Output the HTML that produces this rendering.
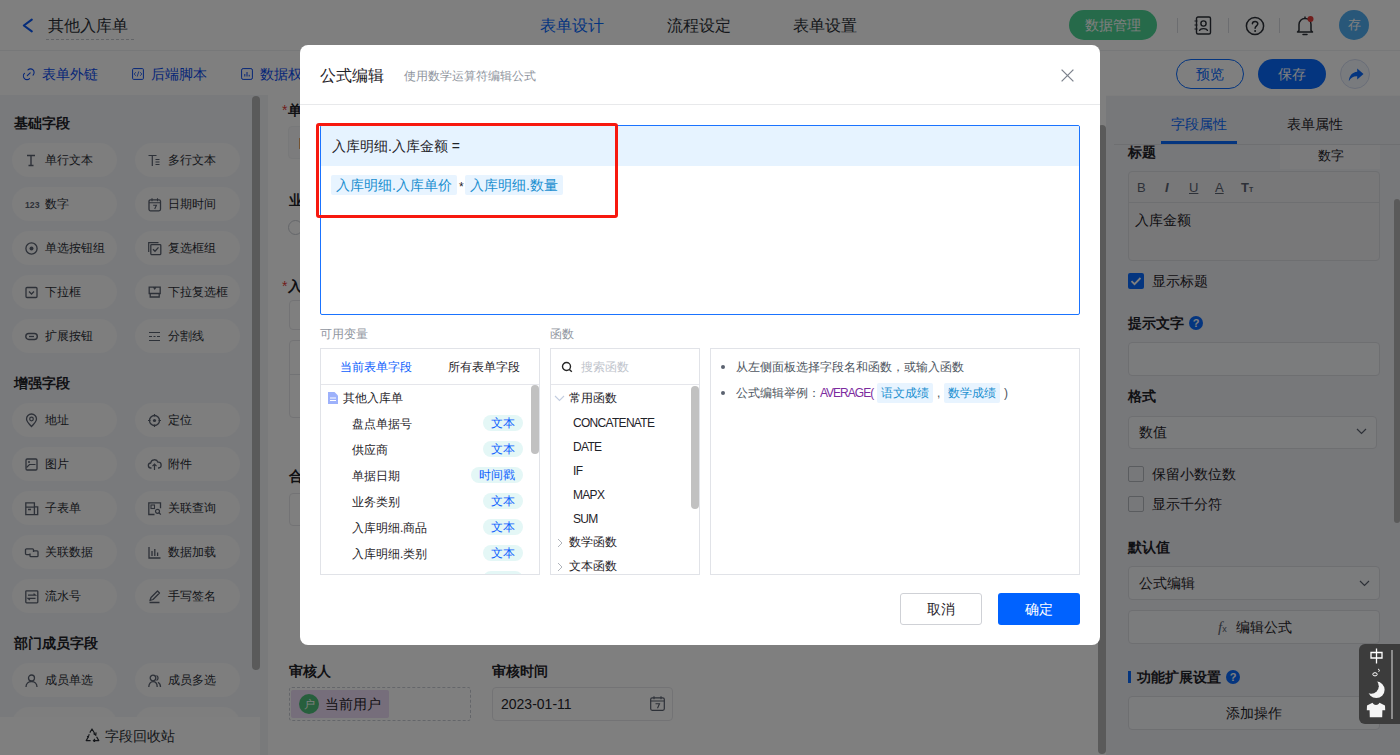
<!DOCTYPE html>
<html><head><meta charset="utf-8">
<style>
*{box-sizing:border-box;margin:0;padding:0}
html,body{width:1400px;height:755px;overflow:hidden;background:#fff;font-family:"Liberation Sans",sans-serif;color:#1f2329}
.a{position:absolute}
#app{position:absolute;left:0;top:0;width:1400px;height:755px;overflow:hidden}
/* header */
#hdr{left:0;top:0;width:1400px;height:51px;background:#fff;border-bottom:1px solid #eff0f2}
#sub{left:0;top:51px;width:1400px;height:44px;background:#fff}
#left{left:0;top:95px;width:260px;height:660px;background:#f3f5f8}
#canvas{left:260px;top:95px;width:846px;height:660px;background:#f3f4f6}
#form{left:268px;top:95px;width:838px;height:660px;background:#fff}
#right{left:1106px;top:95px;width:294px;height:660px;background:#eff0f4}
.t{position:absolute;white-space:nowrap;line-height:1.4}
.blue{color:#0a4bf0}
.btn-green{left:1069px;top:10px;width:88px;height:30px;border-radius:15px;background:#4cd495;color:#fff;font-size:14px;line-height:30px;text-align:center}
.sep{top:18px;width:1px;height:15px;background:#d9dbe0}
.avatar{left:1339px;top:10px;width:30px;height:30px;border-radius:50%;background:#50aef2;color:#fff;font-size:13px;line-height:30px;text-align:center}
.btn-out{left:1176px;top:8px;width:68px;height:30px;border:1px solid #086aff;border-radius:15px;color:#086aff;font-size:14px;line-height:28px;text-align:center}
.btn-save{left:1258px;top:8px;width:68px;height:30px;border-radius:15px;background:#086aff;color:#fff;font-size:14px;line-height:30px;text-align:center}
.share{left:1340px;top:8px;width:30px;height:30px;border-radius:50%;border:1px solid #d3dcf0;background:#f3f6fd}
.sec{position:absolute;left:14px;font-size:14px;font-weight:bold;color:#1f2329;line-height:20px;white-space:nowrap}
.pill{position:absolute;width:105px;height:34px;border-radius:17px;background:#fcfcfd;font-size:12px;color:#2b2f36;line-height:34px;white-space:nowrap}
.pill .ic{position:absolute;left:13px;top:10.5px;overflow:visible}
.pill span{position:absolute;left:33px;top:0}
.recycle{position:absolute;left:0;top:622px;width:260px;height:38px;background:#fff;font-size:14px;color:#2b2f36;line-height:20px}
.lbl{position:absolute;font-size:14px;font-weight:bold;color:#1f2329;line-height:20px;white-space:nowrap}
.lbl i{font-style:normal;color:#e23c39;font-weight:normal;margin-right:1px}
.inp{position:absolute;border:1px solid #e6e7ea;border-radius:4px;background:#fff}
.tb{font-size:13px;line-height:16px;color:#5b6270}
.qm{position:absolute;width:14px;height:14px;border-radius:50%;background:#086aff;color:#fff;font-size:11px;font-weight:bold;line-height:14px;text-align:center}
.cb{position:absolute;width:16px;height:16px;border:1px solid #b4b8bf;border-radius:2px;background:transparent}
.box{position:absolute;border:1px solid #e1e3e8;background:#fff}
.vtag{position:absolute;height:16px;border-radius:8px;background:#e4f7f6;color:#0f62fe;font-size:12px;line-height:16px;text-align:center}
.ftag{position:absolute;height:20px;padding:0 5px;border-radius:2px;background:#e8f4ff;color:#1a8fd0;font-size:14px;line-height:20px;white-space:nowrap}
.etag{position:absolute;height:20px;border-radius:2px;background:#e8f4ff;color:#1a8fd0;font-size:12px;line-height:20px;text-align:center}
.mask{position:absolute;left:0;top:0;width:1400px;height:755px;background:rgba(0,0,0,.5)}
.modal{position:absolute;left:300px;top:45px;width:800px;height:600px;background:#fff;border-radius:8px}
</style></head><body>
<div id="app">
  <div id="hdr" class="a">
    <svg class="a" style="left:22px;top:17px" width="12" height="17" viewBox="0 0 12 17"><path d="M9.8 2.6 L1.8 8.5 L9.8 14.4" fill="none" stroke="#0a58f5" stroke-width="2.1" stroke-linecap="round" stroke-linejoin="round"/></svg>
    <div class="t" style="left:48px;top:15px;font-size:16px;color:#2b2f36">其他入库单</div>
    <div class="a" style="left:46px;top:39px;width:88px;border-top:1px dashed #c5c8ce"></div>
    <div class="t" style="left:540px;top:15px;font-size:16px;color:#086aff">表单设计</div>
    <div class="t" style="left:667px;top:15px;font-size:16px;color:#2b2f36">流程设定</div>
    <div class="t" style="left:793px;top:15px;font-size:16px;color:#2b2f36">表单设置</div>
    <div class="a btn-green">数据管理</div>
    <div class="a sep" style="left:1177px"></div>
    <div class="a sep" style="left:1228px"></div>
    <div class="a sep" style="left:1279px"></div>
    <svg class="a" style="left:1193px;top:16px" width="20" height="19" viewBox="0 0 20 19"><rect x="3.5" y="1" width="14" height="17" rx="1.5" fill="none" stroke="#2b2f36" stroke-width="1.4"/><circle cx="10.5" cy="7.5" r="2.6" fill="none" stroke="#2b2f36" stroke-width="1.4"/><path d="M6.5 15 C6.8 11.8 14.2 11.8 14.5 15" fill="none" stroke="#2b2f36" stroke-width="1.4"/><path d="M1.5 5h3M1.5 9h3M1.5 13h3" stroke="#2b2f36" stroke-width="1.2"/></svg>
    <svg class="a" style="left:1245px;top:16px" width="20" height="20" viewBox="0 0 20 20"><circle cx="10" cy="10" r="8.6" fill="none" stroke="#2b2f36" stroke-width="1.5"/><path d="M7.4 7.8 C7.4 4.6 12.8 4.6 12.8 7.8 C12.8 9.8 10.1 10 10.1 12.3" fill="none" stroke="#2b2f36" stroke-width="1.5" stroke-linecap="round"/><circle cx="10.1" cy="14.9" r="1" fill="#2b2f36"/></svg>
    <svg class="a" style="left:1296px;top:15px" width="18" height="21" viewBox="0 0 18 21"><path d="M3 15.5 V9.5 C3 6 5.6 3.6 9 3.6 C12.4 3.6 15 6 15 9.5 V15.5 L16.5 17 H1.5 Z" fill="none" stroke="#2b2f36" stroke-width="1.5" stroke-linejoin="round"/><path d="M7 19.5 H11" stroke="#2b2f36" stroke-width="1.5" stroke-linecap="round"/><path d="M9 1.5 V3.5" stroke="#2b2f36" stroke-width="1.4"/><circle cx="14.5" cy="4" r="3" fill="#e23c39"/></svg>
    <div class="a avatar">存</div>
  </div>
  <div id="sub" class="a">
    <svg class="a" style="left:22px;top:16px" width="14" height="14" viewBox="0 0 14 14"><path d="M5.95 2.95A3.6 3.6 0 0 1 11.05 8.05M7.55 11.55A3.6 3.6 0 0 1 2.45 6.45M5.3 8.7L8.2 5.8" fill="none" stroke="#0a4bf0" stroke-width="1.1" stroke-linecap="round"/></svg>
    <div class="t blue" style="left:42px;top:14px;font-size:14px">表单外链</div>
    <svg class="a" style="left:132px;top:17px" width="12" height="12" viewBox="0 0 12 12"><rect x="0.6" y="0.6" width="10.8" height="10.8" rx="1" fill="none" stroke="#0a4bf0" stroke-width="1"/><path d="M3.8 4.2 L2.2 6 L3.8 7.8 M8.2 4.2 L9.8 6 L8.2 7.8 M6.8 3.4 L5.2 8.6" fill="none" stroke="#0a4bf0" stroke-width="0.8"/></svg>
    <div class="t blue" style="left:151px;top:14px;font-size:14px">后端脚本</div>
    <svg class="a" style="left:241px;top:17px" width="12" height="12" viewBox="0 0 12 12"><rect x="0.6" y="0.6" width="10.8" height="10.8" rx="1.5" fill="none" stroke="#0a4bf0" stroke-width="1"/><path d="M3.8 8.5V6M6 8.5V4M8.2 8.5V6.8" stroke="#0a4bf0" stroke-width="1"/></svg>
    <div class="t blue" style="left:260px;top:14px;font-size:14px">数据权限</div>
    <div class="a btn-out">预览</div>
    <div class="a btn-save">保存</div>
    <div class="a share"><svg width="16" height="14" viewBox="0 0 16 14" style="position:absolute;left:7px;top:8px"><path d="M9.2 0.5 L15.5 6 L9.2 11.5 V8.3 C5.5 8.1 2.8 9.6 0.8 13.2 C1.2 7.6 4.3 4.2 9.2 3.7 Z" fill="#086aff"/></svg></div>
  </div>
  <div id="left" class="a">
<div class="sec" style="top:18px">基础字段</div>
<div class="pill" style="left:12px;top:48px"><svg class="ic" width="13" height="13" viewBox="0 0 13 13"><path d="M2 1.5h8M6 1.5v10M3.5 11.5h5" stroke="#5b6270" stroke-width="1.4" fill="none"/></svg><span>单行文本</span></div>
<div class="pill" style="left:135px;top:48px"><svg class="ic" width="13" height="13" viewBox="0 0 13 13"><path d="M0.5 1.5h8M4.3 1.5v10.5M7.5 5.5h4M7.5 8h4M7.5 10.5h4" stroke="#5b6270" stroke-width="1.2" fill="none"/></svg><span>多行文本</span></div>
<div class="pill" style="left:12px;top:92px"><svg class="ic" width="13" height="13" viewBox="0 0 13 13"><text x="0" y="10" font-size="9.5" font-weight="bold" fill="#5b6270" font-family="Liberation Sans" textLength="14.5" lengthAdjust="spacingAndGlyphs">123</text></svg><span>数字</span></div>
<div class="pill" style="left:135px;top:92px"><svg class="ic" width="13" height="13" viewBox="0 0 13 13"><rect x="1" y="1.8" width="11.5" height="11" rx="1.5" stroke="#5b6270" stroke-width="1.3" fill="none"/><path d="M1 4.8h11.5M4 0.2v3M9.5 0.2v3M5.2 7.3h3.2l-1.7 3.6" stroke="#5b6270" stroke-width="1.1" fill="none"/></svg><span>日期时间</span></div>
<div class="pill" style="left:12px;top:136px"><svg class="ic" width="13" height="13" viewBox="0 0 13 13"><circle cx="6.5" cy="6.5" r="5.6" stroke="#5b6270" stroke-width="1.3" fill="none"/><circle cx="6.5" cy="6.5" r="2" fill="#5b6270"/></svg><span>单选按钮组</span></div>
<div class="pill" style="left:135px;top:136px"><svg class="ic" width="13" height="13" viewBox="0 0 13 13"><path d="M0.7 10V0.7H10.5" stroke="#5b6270" stroke-width="1.2" fill="none"/><rect x="2.8" y="2.6" width="10" height="10" rx="0.8" stroke="#5b6270" stroke-width="1.3" fill="none"/><path d="M5 7.2l2 2 3.5-3.8" stroke="#5b6270" stroke-width="1.3" fill="none"/></svg><span>复选框组</span></div>
<div class="pill" style="left:12px;top:180px"><svg class="ic" width="13" height="13" viewBox="0 0 13 13"><rect x="1" y="1.5" width="11" height="10" rx="1" stroke="#5b6270" stroke-width="1.3" fill="none"/><path d="M4 5.5l2.5 2.5 2.5-2.5" stroke="#5b6270" stroke-width="1.3" fill="none"/></svg><span>下拉框</span></div>
<div class="pill" style="left:135px;top:180px"><svg class="ic" width="13" height="13" viewBox="0 0 13 13"><path d="M1.2 1.2H12.2V7.5H1.2Z" stroke="#5b6270" stroke-width="1.3" fill="none"/><path d="M5.5 1.2L6.7 3 7.9 1.2" stroke="#5b6270" stroke-width="1.2" fill="#5b6270"/><path d="M2.2 7.5V11H11.2V7.5" stroke="#5b6270" stroke-width="1.3" fill="none"/></svg><span>下拉复选框</span></div>
<div class="pill" style="left:12px;top:224px"><svg class="ic" width="13" height="13" viewBox="0 0 13 13"><rect x="0.8" y="3.5" width="11.5" height="6" rx="3" stroke="#5b6270" stroke-width="1.4" fill="none"/><path d="M4 6.5h5" stroke="#5b6270" stroke-width="1.3"/></svg><span>扩展按钮</span></div>
<div class="pill" style="left:135px;top:224px"><svg class="ic" width="13" height="13" viewBox="0 0 13 13"><path d="M1 2.5h11M1 6.5h3M5.5 6.5h2M9 6.5h3M1 10.5h11" stroke="#5b6270" stroke-width="1.2" fill="none"/></svg><span>分割线</span></div>

<div class="sec" style="top:278px">增强字段</div>
<div class="pill" style="left:12px;top:308px"><svg class="ic" width="13" height="13" viewBox="0 0 13 13"><path d="M6.5 12.5C3 9 1.5 6.8 1.5 5a5 5 0 0 1 10 0c0 1.8-1.5 4-5 7.5z" stroke="#5b6270" stroke-width="1.3" fill="none"/><circle cx="6.5" cy="5" r="1.8" stroke="#5b6270" stroke-width="1.2" fill="none"/></svg><span>地址</span></div>
<div class="pill" style="left:135px;top:308px"><svg class="ic" width="13" height="13" viewBox="0 0 13 13"><circle cx="6.5" cy="6.5" r="5" stroke="#5b6270" stroke-width="1.3" fill="none"/><circle cx="6.5" cy="6.5" r="1.6" fill="#5b6270"/><path d="M6.5 0v2.5M6.5 10.5V13M0 6.5h2.5M10.5 6.5H13" stroke="#5b6270" stroke-width="1.2"/></svg><span>定位</span></div>
<div class="pill" style="left:12px;top:352px"><svg class="ic" width="13" height="13" viewBox="0 0 13 13"><rect x="1" y="1" width="11" height="11" rx="1.2" stroke="#5b6270" stroke-width="1.3" fill="none"/><path d="M1.5 9.5l3-3 6 0" stroke="#5b6270" stroke-width="1.2" fill="none"/><circle cx="4" cy="4" r="1" fill="#5b6270"/></svg><span>图片</span></div>
<div class="pill" style="left:135px;top:352px"><svg class="ic" width="13" height="13" viewBox="0 0 13 13"><path d="M3.5 10H3a2.5 2.5 0 0 1-.3-5A3.8 3.8 0 0 1 10 4.2 2.9 2.9 0 0 1 10.5 10H10" stroke="#5b6270" stroke-width="1.3" fill="none"/><path d="M6.5 12V6.5M4.5 8.2l2-2 2 2" stroke="#5b6270" stroke-width="1.2" fill="none"/></svg><span>附件</span></div>
<div class="pill" style="left:12px;top:396px"><svg class="ic" width="13" height="13" viewBox="0 0 13 13"><path d="M0.8 0.8h8.6v11.8H0.8zM0.8 5.2h8.6M3 7.5h3M9.4 4.8h3.3v7.8H9.4" stroke="#5b6270" stroke-width="1.3" fill="none"/></svg><span>子表单</span></div>
<div class="pill" style="left:135px;top:396px"><svg class="ic" width="13" height="13" viewBox="0 0 13 13"><path d="M6.5 12.5H0.8V0.8h11.7v5.5" stroke="#5b6270" stroke-width="1.3" fill="none"/><rect x="3" y="3" width="3.5" height="3.5" stroke="#5b6270" stroke-width="1.1" fill="none"/><circle cx="9.5" cy="9.3" r="2" stroke="#5b6270" stroke-width="1.2" fill="none"/><path d="M11 10.8l1.8 1.8" stroke="#5b6270" stroke-width="1.3"/></svg><span>关联查询</span></div>
<div class="pill" style="left:12px;top:440px"><svg class="ic" width="13" height="13" viewBox="0 0 13 13"><path d="M5 8.6H1.5a1 1 0 0 1-1-1V3.8a1 1 0 0 1 1-1h6a1 1 0 0 1 1 1V6" stroke="#5b6270" stroke-width="1.3" fill="none"/><path d="M8.5 4.8H12a1 1 0 0 1 1 1v3.9a1 1 0 0 1-1 1H6a1 1 0 0 1-1-1V7.4" stroke="#5b6270" stroke-width="1.3" fill="none"/></svg><span>关联数据</span></div>
<div class="pill" style="left:135px;top:440px"><svg class="ic" width="13" height="13" viewBox="0 0 13 13"><path d="M1 1v11h11.5M4 10V5M6.8 10V3M9.6 10V6.5" stroke="#5b6270" stroke-width="1.3" fill="none"/></svg><span>数据加载</span></div>
<div class="pill" style="left:12px;top:484px"><svg class="ic" width="13" height="13" viewBox="0 0 13 13"><rect x="0.8" y="0.8" width="12" height="12" rx="0.8" stroke="#5b6270" stroke-width="1.3" fill="none"/><path d="M3 5.2h7.5L8.6 3.6M10.5 8.4H3l1.9 1.6" stroke="#5b6270" stroke-width="1.2" fill="none"/></svg><span>流水号</span></div>
<div class="pill" style="left:135px;top:484px"><svg class="ic" width="13" height="13" viewBox="0 0 13 13"><path d="M2 10.5l1-3L9.5 1 11.5 3 5 9.5zM1.5 12.5h10" stroke="#5b6270" stroke-width="1.3" fill="none" stroke-linejoin="round"/></svg><span>手写签名</span></div>

<div class="sec" style="top:538px">部门成员字段</div>
<div class="pill" style="left:12px;top:568px"><svg class="ic" width="13" height="13" viewBox="0 0 13 13"><circle cx="6.5" cy="4" r="3" stroke="#5b6270" stroke-width="1.3" fill="none"/><path d="M1 13c0-3.5 2.5-5.5 5.5-5.5s5.5 2 5.5 5.5" stroke="#5b6270" stroke-width="1.3" fill="none"/></svg><span>成员单选</span></div>
<div class="pill" style="left:135px;top:568px"><svg class="ic" width="13" height="13" viewBox="0 0 13 13"><circle cx="5" cy="4" r="2.8" stroke="#5b6270" stroke-width="1.3" fill="none"/><path d="M0.8 13c0-3.3 1.8-5.3 4.2-5.3s4.2 2 4.2 5.3M8.5 1.5a2.8 2.8 0 0 1 0 5M10 8.2c1.5.8 2.5 2.5 2.5 4.8" stroke="#5b6270" stroke-width="1.3" fill="none"/></svg><span>成员多选</span></div>
<div class="pill" style="left:12px;top:612px"><svg class="ic" width="13" height="13" viewBox="0 0 13 13"><circle cx="6.5" cy="4" r="3" stroke="#5b6270" stroke-width="1.3" fill="none"/><path d="M1 13c0-3.5 2.5-5.5 5.5-5.5s5.5 2 5.5 5.5" stroke="#5b6270" stroke-width="1.3" fill="none"/></svg><span>部门单选</span></div>
<div class="pill" style="left:135px;top:612px"><svg class="ic" width="13" height="13" viewBox="0 0 13 13"><circle cx="5" cy="4" r="2.8" stroke="#5b6270" stroke-width="1.3" fill="none"/><path d="M0.8 13c0-3.3 1.8-5.3 4.2-5.3s4.2 2 4.2 5.3M8.5 1.5a2.8 2.8 0 0 1 0 5M10 8.2c1.5.8 2.5 2.5 2.5 4.8" stroke="#5b6270" stroke-width="1.3" fill="none"/></svg><span>部门多选</span></div>

<div class="a" style="left:252px;top:1px;width:8px;height:574px;border-radius:4px;background:#b5b5b5"></div>
<div class="recycle"><svg width="15" height="14" viewBox="0 0 15 14" style="position:absolute;left:85px;top:11px"><path d="M4.8 4.6L7 1l3.6 6M11.6 8.8L13.8 12.6H8.6M5.6 12.6H1.2L3.4 8.8" fill="none" stroke="#2b2f36" stroke-width="1.2" stroke-linejoin="round"/><path d="M8.4 5.6l2.4 1.6.3-2.8M10 11l-1.6 1.6 1.6 1.4M2 8.4l1.4.4.8-2.6" fill="none" stroke="#2b2f36" stroke-width="1.1"/></svg><span style="position:absolute;left:105px;top:9px">字段回收站</span></div>
</div>
  <div id="canvas" class="a"></div>
  <div id="form" class="a">
    <div class="lbl" style="left:14px;top:5px"><i>*</i>单据编号</div>
    <div class="inp" style="left:20px;top:31px;width:370px;height:33px;background:#f9f9fa;border-color:#f1f2f4"></div>
    <div class="a" style="left:31px;top:43px;width:1px;height:11px;background:#e8a868"></div>
    <div class="lbl" style="left:21px;top:95px">业务类别</div>
    <div class="a" style="left:20px;top:125px;width:15px;height:15px;border:1px solid #c9cdd4;border-radius:50%;background:#fff"></div>
    <div class="lbl" style="left:14px;top:181px"><i>*</i>入库明细</div>
    <div class="inp" style="left:21px;top:205px;width:370px;height:30px"></div>
    <div class="inp" style="left:21px;top:245px;width:790px;height:78px"></div>
    <div class="a" style="left:21px;top:279px;width:790px;height:1px;background:#e5e6eb"></div>
    <div class="lbl" style="left:21px;top:371px">合计金额</div>
    <div class="inp" style="left:21px;top:398px;width:370px;height:33px"></div>
    <div class="lbl" style="left:21px;top:566px">审核人</div>
    <div class="a" style="left:21px;top:592px;width:182px;height:34px;border:1px dashed #c9cdd4;border-radius:3px"></div>
    <div class="a" style="left:23px;top:595px;width:98px;height:28px;border-radius:2px;background:#eddcf6"></div>
    <div class="a" style="left:31px;top:599px;width:20px;height:20px;border-radius:50%;background:#4fbf7a;color:#fff;font-size:11px;line-height:20px;text-align:center">户</div>
    <div class="t" style="left:57px;top:599px;font-size:14px;line-height:20px;color:#1f2329">当前用户</div>
    <div class="lbl" style="left:224px;top:566px">审核时间</div>
    <div class="inp" style="left:224px;top:592px;width:181px;height:34px"></div>
    <div class="t" style="left:233px;top:599px;font-size:14px;line-height:20px;color:#1f2329">2023-01-11</div>
    <svg class="a" style="left:382px;top:601px" width="15" height="15" viewBox="0 0 15 15"><rect x="0.7" y="1.8" width="13.6" height="12.5" rx="1.5" fill="none" stroke="#5b6270" stroke-width="1.2"/><path d="M0.7 5h13.6M4 0.3v3M11 0.3v3M5.5 7.8h4l-2 4.5" fill="none" stroke="#5b6270" stroke-width="1.1"/></svg>
  </div>
  <div class="a" style="left:1098px;top:125px;width:8px;height:629px;border-radius:4px;background:#b5b5b5"></div>
  <div id="right" class="a">
    <div class="a" style="left:0;top:0;width:294px;height:1px;background:#fafafb"></div>
    
    <div class="t" style="left:65px;top:19px;font-size:14px;line-height:20px;color:#086aff">字段属性</div>
    <div class="t" style="left:181px;top:19px;font-size:14px;line-height:20px;color:#1f2329">表单属性</div>
    <div class="a" style="left:8px;top:49px;width:286px;height:1px;background:#dcdee3"></div>
    <div class="a" style="left:55px;top:46px;width:76px;height:3px;background:#086aff"></div>
    <div class="lbl" style="left:22px;top:47px">标题</div>
    <div class="a" style="left:174px;top:50px;width:100px;height:24px;background:#f6f7f9"></div>
    <div class="t" style="left:212px;top:51px;font-size:13px;line-height:20px;color:#1f2329">数字</div>
    <div class="inp" style="left:22px;top:76px;width:252px;height:90px;background:#f0f1f3;border-color:#dcdee3"></div>
    <div class="a" style="left:23px;top:107px;width:250px;height:1px;background:#dcdee3"></div>
    <div class="t tb" style="left:31px;top:85px">B</div>
    <div class="t tb" style="left:59px;top:85px;font-style:italic;font-weight:bold;font-size:13px">I</div>
    <div class="t tb" style="left:83px;top:85px;text-decoration:underline">U</div>
    <div class="t tb" style="left:109px;top:85px;text-decoration:underline">A</div>
    <div class="t tb" style="left:135px;top:85px;font-weight:bold">T<span style="font-size:7px">T</span></div>
    <div class="t" style="left:29px;top:115px;font-size:14px;line-height:20px;color:#1f2329">入库金额</div>
    <div class="a" style="left:22px;top:178px;width:16px;height:16px;border-radius:2px;background:#086aff"><svg width="16" height="16" viewBox="0 0 16 16" style="position:absolute;left:0;top:0"><path d="M3.5 8.2l3 3 6-6.2" fill="none" stroke="#fff" stroke-width="1.8"/></svg></div>
    <div class="t" style="left:46px;top:176px;font-size:14px;line-height:20px;color:#1f2329">显示标题</div>
    <div class="lbl" style="left:22px;top:218px">提示文字</div>
    <div class="qm" style="left:83px;top:221px">?</div>
    <div class="inp" style="left:22px;top:247px;width:252px;height:34px;background:#f7f8fa;border-color:#dcdee3"></div>
    <div class="lbl" style="left:22px;top:291px">格式</div>
    <div class="inp" style="left:22px;top:321px;width:249px;height:33px;background:#f7f8fa;border-color:#dcdee3"></div>
    <div class="t" style="left:33px;top:327px;font-size:14px;line-height:20px;color:#1f2329">数值</div>
    <svg class="a" style="left:250px;top:333px" width="11" height="7" viewBox="0 0 11 7"><path d="M1 1l4.5 4.5L10 1" fill="none" stroke="#5b6270" stroke-width="1.2"/></svg>
    <div class="cb" style="left:22px;top:371px"></div>
    <div class="t" style="left:46px;top:369px;font-size:14px;line-height:20px;color:#1f2329">保留小数位数</div>
    <div class="cb" style="left:22px;top:401px"></div>
    <div class="t" style="left:46px;top:399px;font-size:14px;line-height:20px;color:#1f2329">显示千分符</div>
    <div class="lbl" style="left:22px;top:442px">默认值</div>
    <div class="inp" style="left:22px;top:471px;width:252px;height:34px;background:#f7f8fa;border-color:#dcdee3"></div>
    <div class="t" style="left:33px;top:478px;font-size:14px;line-height:20px;color:#1f2329">公式编辑</div>
    <svg class="a" style="left:253px;top:485px" width="11" height="7" viewBox="0 0 11 7"><path d="M1 1l4.5 4.5L10 1" fill="none" stroke="#5b6270" stroke-width="1.2"/></svg>
    <div class="inp" style="left:22px;top:515px;width:252px;height:34px;background:#f7f8fa;border-color:#dcdee3"></div>
    <div class="t" style="left:112px;top:522px;font-size:15px;line-height:20px;color:#5b6270;font-family:'Liberation Serif',serif;font-style:italic">f<span style="font-size:9px;font-style:normal;font-family:'Liberation Sans',sans-serif">x</span></div>
    <div class="t" style="left:130px;top:522px;font-size:14px;line-height:20px;color:#1f2329">编辑公式</div>
    <div class="a" style="left:22px;top:576px;width:3px;height:12px;background:#086aff"></div>
    <div class="lbl" style="left:31px;top:572px">功能扩展设置</div>
    <div class="qm" style="left:120px;top:575px">?</div>
    <div class="inp" style="left:22px;top:601px;width:252px;height:34px;background:#f7f8fa;border-color:#dcdee3"></div>
    <div class="t" style="left:120px;top:608px;font-size:14px;line-height:20px;color:#1f2329">添加操作</div>
    <div class="a" style="left:288px;top:104px;width:6px;height:324px;border-radius:3px;background:#b5b5b5"></div>
  </div>
</div>
<div class="mask"></div>
<div class="modal">
  <div class="t" style="left:20px;top:20px;font-size:16px;line-height:22px;color:#1f2329">公式编辑</div>
  <div class="t" style="left:104px;top:22px;font-size:12px;line-height:18px;color:#8f959e">使用数学运算符编辑公式</div>
  <svg class="a" style="left:761px;top:24px" width="13" height="13" viewBox="0 0 13 13"><path d="M0.6 0.6L12.4 12.4M12.4 0.6L0.6 12.4" stroke="#7d838d" stroke-width="1.3"/></svg>
  <div class="a" style="left:0;top:59px;width:800px;height:1px;background:#e8e9eb"></div>
  <div class="a" style="left:20px;top:80px;width:760px;height:190px;border:1px solid #1a73ff;border-radius:2px;overflow:hidden">
    <div class="a" style="left:0;top:0;width:758px;height:40px;background:#e6f3ff"></div>
    <div class="t" style="left:11px;top:10px;font-size:14px;line-height:20px;color:#1f2329">入库明细.入库金额 =</div>
    <div class="ftag" style="left:10px;top:49px">入库明细.入库单价</div>
    <div class="t" style="left:138px;top:51px;font-size:12px;line-height:20px;color:#1f2329">*</div>
    <div class="ftag" style="left:144px;top:49px">入库明细.数量</div>
  </div>
  <div class="a" style="left:16px;top:78px;width:302px;height:95px;border:3px solid #f7180f;border-radius:3px"></div>
  <div class="t" style="left:20px;top:280px;font-size:12px;line-height:18px;color:#8f959e">可用变量</div>
  <div class="t" style="left:250px;top:280px;font-size:12px;line-height:18px;color:#8f959e">函数</div>
  <div class="box" style="left:20px;top:303px;width:220px;height:227px">
    <div class="a" style="left:0;top:35px;width:218px;height:1px;background:#e5e6eb"></div>
  </div>
  <div class="t" style="left:40px;top:312px;font-size:12px;line-height:20px;color:#0d5efc">当前表单字段</div>
  <div class="t" style="left:148px;top:312px;font-size:12px;line-height:20px;color:#1f2329">所有表单字段</div>
  <svg class="a" style="left:28px;top:347px" width="10" height="12" viewBox="0 0 10 12"><path d="M0 0h6.5L10 3.5V12H0z" fill="#9db1fb"/><path d="M2 6h6M2 8.5h6" stroke="#fff" stroke-width="1"/></svg>
  <div class="t" style="left:43px;top:343px;font-size:12px;line-height:20px;color:#1f2329">其他入库单</div>
  <div class="t" style="left:52px;top:369px;font-size:12px;line-height:20px;color:#1f2329">盘点单据号</div><div class="vtag" style="left:183px;top:370px;width:40px">文本</div>
<div class="t" style="left:52px;top:395px;font-size:12px;line-height:20px;color:#1f2329">供应商</div><div class="vtag" style="left:183px;top:396px;width:40px">文本</div>
<div class="t" style="left:52px;top:421px;font-size:12px;line-height:20px;color:#1f2329">单据日期</div><div class="vtag" style="left:171px;top:422px;width:52px">时间戳</div>
<div class="t" style="left:52px;top:447px;font-size:12px;line-height:20px;color:#1f2329">业务类别</div><div class="vtag" style="left:183px;top:448px;width:40px">文本</div>
<div class="t" style="left:52px;top:473px;font-size:12px;line-height:20px;color:#1f2329">入库明细.商品</div><div class="vtag" style="left:183px;top:474px;width:40px">文本</div>
<div class="t" style="left:52px;top:499px;font-size:12px;line-height:20px;color:#1f2329">入库明细.类别</div><div class="vtag" style="left:183px;top:500px;width:40px">文本</div>
<div class="a" style="left:183px;top:526px;width:40px;height:3px;overflow:hidden"><div class="vtag" style="left:0;top:0;width:40px"></div></div>

  <div class="a" style="left:231px;top:340px;width:8px;height:69px;border-radius:4px;background:#c1c1c1"></div>
  <div class="box" style="left:250px;top:303px;width:150px;height:227px;overflow:hidden">
    <div class="a" style="left:0;top:35px;width:148px;height:1px;background:#e5e6eb"></div>
  </div>
  <svg class="a" style="left:261px;top:316px" width="12" height="12" viewBox="0 0 12 12"><circle cx="5.5" cy="5.5" r="4" fill="none" stroke="#262626" stroke-width="1.4"/><path d="M8.4 8.4L10.8 10.8" stroke="#262626" stroke-width="1.4"/></svg>
  <div class="t" style="left:281px;top:312px;font-size:12px;line-height:20px;color:#c0c4cc">搜索函数</div>
  <svg class="a" style="left:254px;top:350px" width="11" height="7" viewBox="0 0 11 7"><path d="M1 1l4.5 4.5L10 1" fill="none" stroke="#c3cde0" stroke-width="1.1"/></svg>
  <div class="t" style="left:269px;top:343px;font-size:12px;line-height:20px;color:#1f2329">常用函数</div>
  <div class="t" style="left:273px;top:367.5px;font-size:12px;line-height:20px;color:#1f2329;letter-spacing:-0.7px">CONCATENATE</div>
<div class="t" style="left:273px;top:391.5px;font-size:12px;line-height:20px;color:#1f2329;letter-spacing:-0.7px">DATE</div>
<div class="t" style="left:273px;top:415.5px;font-size:12px;line-height:20px;color:#1f2329;letter-spacing:-0.7px">IF</div>
<div class="t" style="left:273px;top:439.5px;font-size:12px;line-height:20px;color:#1f2329;letter-spacing:-0.7px">MAPX</div>
<div class="t" style="left:273px;top:463.5px;font-size:12px;line-height:20px;color:#1f2329;letter-spacing:-0.7px">SUM</div>

  <svg class="a" style="left:257px;top:493px" width="6" height="10" viewBox="0 0 6 10"><path d="M1 1l4 4-4 4" fill="none" stroke="#b0b4bb" stroke-width="1"/></svg>
  <div class="t" style="left:269px;top:487px;font-size:12px;line-height:20px;color:#1f2329">数学函数</div>
  <svg class="a" style="left:257px;top:517px" width="6" height="10" viewBox="0 0 6 10"><path d="M1 1l4 4-4 4" fill="none" stroke="#b0b4bb" stroke-width="1"/></svg>
  <div class="t" style="left:269px;top:511px;font-size:12px;line-height:20px;color:#1f2329">文本函数</div>
  <div class="a" style="left:391px;top:341px;width:8px;height:123px;border-radius:4px;background:#c1c1c1"></div>
  <div class="box" style="left:410px;top:303px;width:370px;height:227px"></div>
  <div class="a" style="left:421px;top:320px;width:4px;height:4px;border-radius:50%;background:#5b6270"></div>
  <div class="t" style="left:436px;top:312px;font-size:12px;line-height:20px;color:#4e5661">从左侧面板选择字段名和函数，或输入函数</div>
  <div class="a" style="left:421px;top:346px;width:4px;height:4px;border-radius:50%;background:#5b6270"></div>
  <div class="t" style="left:436px;top:338px;font-size:12px;line-height:20px;color:#4e5661">公式编辑举例：<span style="color:#7c2b9e;letter-spacing:-1px">AVERAGE(</span></div>
  <div class="etag" style="left:577px;top:338px;width:56px">语文成绩</div>
  <div class="t" style="left:637px;top:338px;font-size:12px;line-height:20px;color:#4e5661">,</div>
  <div class="etag" style="left:644px;top:338px;width:56px">数学成绩</div>
  <div class="t" style="left:704px;top:338px;font-size:12px;line-height:20px;color:#4e5661">)</div>
  <div class="a" style="left:600px;top:548px;width:82px;height:32px;border:1px solid #cfd1d6;border-radius:3px;background:#fff;font-size:14px;line-height:30px;text-align:center;color:#1f2329">取消</div>
  <div class="a" style="left:698px;top:548px;width:82px;height:32px;border-radius:3px;background:#0062ff;font-size:14px;line-height:32px;text-align:center;color:#fff">确定</div>
</div>
<div class="a" style="left:1359px;top:644px;width:48px;height:80px;border-radius:6px;background:#3c3c3c">
  <svg class="a" style="left:11px;top:4px" width="13" height="16" viewBox="0 0 13 16"><path d="M1 4.5h11v5.5H1zM6.5 0.5V15.5" fill="none" stroke="#fff" stroke-width="1.3"/></svg>
  <svg class="a" style="left:13px;top:24px" width="9" height="9" viewBox="0 0 9 9"><ellipse cx="3" cy="6.3" rx="2.2" ry="1.6" fill="none" stroke="#fff" stroke-width="1"/><path d="M6 1.2c1.5 0 1.8 1.5.6 2.6" fill="none" stroke="#fff" stroke-width="1"/></svg>
  <svg class="a" style="left:9px;top:36px" width="17" height="19" viewBox="0 0 17 19"><defs><mask id="mm"><rect width="17" height="19" fill="#fff"/><circle cx="3.2" cy="6.2" r="7.6" fill="#000"/></mask></defs><circle cx="8.3" cy="9.8" r="8.3" fill="#f4f4f4" mask="url(#mm)"/></svg>
  <svg class="a" style="left:7px;top:58px" width="20" height="16" viewBox="0 0 20 16"><path d="M6.5 0.8L1 3.5 0.8 8.2 3.6 8.3 3.8 15.2h12.4l.2-6.9 2.8-.1-.2-4.7L13.5 0.8C12.5 2.2 11.5 3 10 3S7.5 2.2 6.5 0.8z" fill="#f4f4f4"/></svg>
  <div class="a" style="left:32px;top:6px;width:2px;height:69px;background:#8c8c8c"></div>
</div>
</body></html>
